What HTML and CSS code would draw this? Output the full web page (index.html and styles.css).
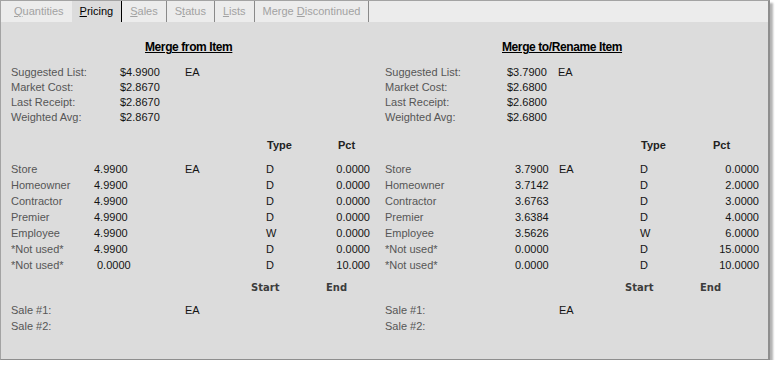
FILE: index.html
```html
<!DOCTYPE html>
<html lang="en">
<head>
  <meta charset="UTF-8">
  <title>Merge Items - Pricing</title>
  <link rel="stylesheet" href="styles.css">
</head>
<body>

  <div class="window">

    <!-- Tabs -->
    <div class="tabs">
      <div class="tab"><u>Q</u>uantities</div>
      <div class="tab tab-active"><u>P</u>ricing</div>
      <div class="tab tab-sep"><u>S</u>ales</div>
      <div class="tab tab-sep">S<u>t</u>atus</div>
      <div class="tab tab-sep"><u>L</u>ists</div>
      <div class="tab tab-sep">Merge <u>D</u>iscontinued</div>
    </div>

    <div class="panel">

      <!-- Merge from -->
      <div class="half half-from">
        <h2 class="title">Merge from Item</h2>

        <div class="summary">
          <span class="lbl">Suggested List:</span><span class="val">$4.9900</span><span class="val">EA</span>
          <span class="lbl">Market Cost:</span><span class="val">$2.8670</span><span></span>
          <span class="lbl">Last Receipt:</span><span class="val">$2.8670</span><span></span>
          <span class="lbl">Weighted Avg:</span><span class="val">$2.8670</span><span></span>
        </div>

        <div class="levels">
          <span></span><span></span><span></span><span class="head type-head">Type</span><span class="head pct-head">Pct</span>
          <span class="lbl">Store</span><span class="val">4.9900</span><span class="val">EA</span><span class="val">D</span><span class="val pct">0.0000</span>
          <span class="lbl">Homeowner</span><span class="val">4.9900</span><span></span><span class="val">D</span><span class="val pct">0.0000</span>
          <span class="lbl">Contractor</span><span class="val">4.9900</span><span></span><span class="val">D</span><span class="val pct">0.0000</span>
          <span class="lbl">Premier</span><span class="val">4.9900</span><span></span><span class="val">D</span><span class="val pct">0.0000</span>
          <span class="lbl">Employee</span><span class="val">4.9900</span><span></span><span class="val">W</span><span class="val pct">0.0000</span>
          <span class="lbl">*Not used*</span><span class="val">4.9900</span><span></span><span class="val">D</span><span class="val pct">0.0000</span>
          <span class="lbl">*Not used*</span><span class="val nudge">0.0000</span><span></span><span class="val">D</span><span class="val pct">10.000</span>
        </div>

        <div class="sales">
          <span></span><span></span><span class="head-sale">Start</span><span class="head-sale">End</span>
          <span class="lbl">Sale #1:</span><span class="val">EA</span><span></span><span></span>
          <span class="lbl">Sale #2:</span><span></span><span></span><span></span>
        </div>
      </div>

      <!-- Merge to -->
      <div class="half half-to">
        <h2 class="title">Merge to/Rename Item</h2>

        <div class="summary">
          <span class="lbl">Suggested List:</span><span class="val">$3.7900</span><span class="val">EA</span>
          <span class="lbl">Market Cost:</span><span class="val">$2.6800</span><span></span>
          <span class="lbl">Last Receipt:</span><span class="val">$2.6800</span><span></span>
          <span class="lbl">Weighted Avg:</span><span class="val">$2.6800</span><span></span>
        </div>

        <div class="levels">
          <span></span><span></span><span></span><span class="head type-head">Type</span><span class="head pct-head">Pct</span>
          <span class="lbl">Store</span><span class="val">3.7900</span><span class="val">EA</span><span class="val">D</span><span class="val pct">0.0000</span>
          <span class="lbl">Homeowner</span><span class="val">3.7142</span><span></span><span class="val">D</span><span class="val pct">2.0000</span>
          <span class="lbl">Contractor</span><span class="val">3.6763</span><span></span><span class="val">D</span><span class="val pct">3.0000</span>
          <span class="lbl">Premier</span><span class="val">3.6384</span><span></span><span class="val">D</span><span class="val pct">4.0000</span>
          <span class="lbl">Employee</span><span class="val">3.5626</span><span></span><span class="val">W</span><span class="val pct">6.0000</span>
          <span class="lbl">*Not used*</span><span class="val">0.0000</span><span></span><span class="val">D</span><span class="val pct">15.0000</span>
          <span class="lbl">*Not used*</span><span class="val">0.0000</span><span></span><span class="val">D</span><span class="val pct">10.0000</span>
        </div>

        <div class="sales">
          <span></span><span></span><span class="head-sale">Start</span><span class="head-sale">End</span>
          <span class="lbl">Sale #1:</span><span class="val">EA</span><span></span><span></span>
          <span class="lbl">Sale #2:</span><span></span><span></span><span></span>
        </div>
      </div>

    </div>
  </div>

</body>
</html>
```

FILE: styles.css
```css
body {
  margin: 0;
  background: #ffffff;
  font-family: "Liberation Sans", Arial, sans-serif;
  font-size: 11px;
}

.window {
  width: 767px;
  height: 358px;
  border: 1px solid #a3a3a3;
  border-right: 2px solid #8e8e8e;
  border-bottom: 1px solid #8e8e8e;
  background: #dcdcdc;
  box-shadow: 3px 3px 2px rgba(0,0,0,0.3);
  display: flex;
  flex-direction: column;
}

/* tab strip */
.tabs {
  display: flex;
  height: 21px;
  background: #ececec;
  padding-left: 5px;
}

.tab {
  padding: 0 8px;
  line-height: 21px;
  color: #a2a2a2;
}

.tab-active {
  background: #dcdcdc;
  color: #000;
  border-right: 1px solid #000;
}

.tab-sep {
  border-right: 1px solid #8a8a8a;
}

/* body */
.panel {
  flex: 1;
  display: flex;
}

.half {
  width: 364px;
  padding-left: 10px;
}

.half-to {
  width: 382px;
}

.title {
  font-size: 12px;
  font-weight: bold;
  letter-spacing: -0.4px;
  text-decoration: underline;
  line-height: 15px;
  margin: 18px 0 10px;
  color: #000;
}

.half-from .title {
  padding-left: 134px;
}

.half-to .title {
  padding-left: 117px;
}

.lbl {
  color: #565656;
}

.val {
  color: #141414;
}

.summary {
  display: grid;
  grid-auto-rows: 15px;
  line-height: 15px;
}

.half-from .summary {
  grid-template-columns: 109px 65px auto;
}

.half-to .summary {
  grid-template-columns: 122px 51px auto;
}

/* price levels */
.levels {
  display: grid;
  margin-top: 13px;
  grid-template-rows: 23px;
  grid-auto-rows: 16px;
  line-height: 16px;
}

.half-from .levels {
  grid-template-columns: 83px 91px 81px 50px 54px;
}

.half-to .levels {
  grid-template-columns: 130px 44px 81px 60px 59px;
}

.head {
  font-weight: bold;
  color: #222;
  line-height: 15px;
}

.type-head {
  padding-left: 1px;
}

.half-from .pct-head {
  padding-left: 22px;
}

.half-to .pct-head {
  padding-left: 13px;
}

.pct {
  text-align: right;
}

.nudge {
  padding-left: 3px;
}

/* sale dates */
.sales {
  display: grid;
  margin-top: 7px;
  grid-template-columns: 174px 66px 75px auto;
  grid-template-rows: 22px;
  grid-auto-rows: 16px;
  line-height: 16px;
}

.head-sale {
  font-family: "DejaVu Sans", sans-serif;
  font-weight: bold;
  font-size: 10px;
  line-height: 15px;
  color: #3c3c3c;
}
```
